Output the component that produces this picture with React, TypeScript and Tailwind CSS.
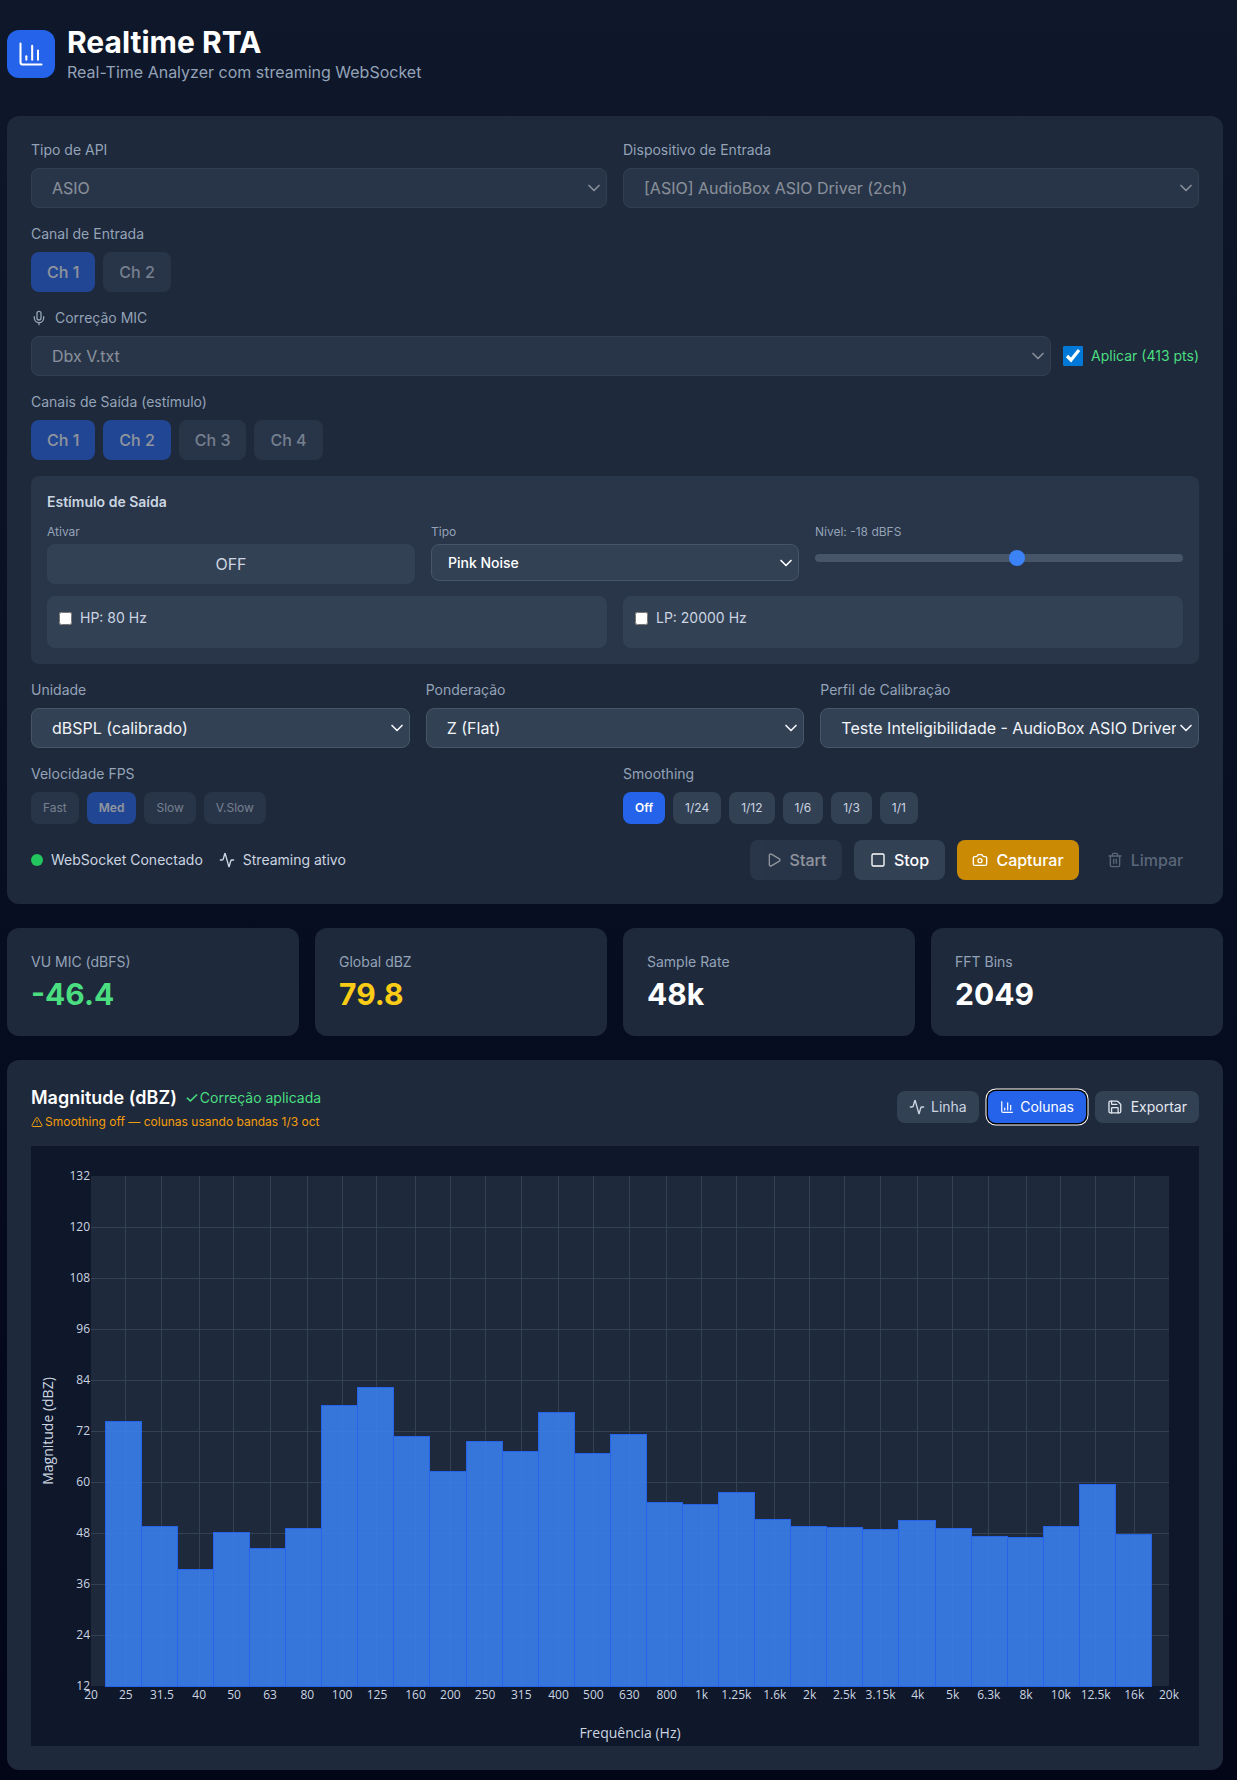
import { Activity, ChartColumn, Camera, ChevronDown, Mic, Play, Save, Square, Trash2, TriangleAlert } from 'lucide-react';

const font = "[font-family:Inter,'DejaVu_Sans',sans-serif]";

const freqs: [number, string][] = [
  [20, '20'], [25, '25'], [31.5, '31.5'], [40, '40'], [50, '50'], [63, '63'], [80, '80'], [100, '100'],
  [125, '125'], [160, '160'], [200, '200'], [250, '250'], [315, '315'], [400, '400'], [500, '500'], [630, '630'],
  [800, '800'], [1000, '1k'], [1250, '1.25k'], [1600, '1.6k'], [2000, '2k'], [2500, '2.5k'], [3150, '3.15k'],
  [4000, '4k'], [5000, '5k'], [6300, '6.3k'], [8000, '8k'], [10000, '10k'], [12500, '12.5k'], [16000, '16k'], [20000, '20k'],
];

// top edge of each column, in px from the top of the chart
const barTops = [
  275.3, 380.3, 423.7, 386.7, 402.3, 382.3, 259.3, 241, 290, 325.3, 295.7, 305, 266, 307.3, 288.3,
  356.3, 358.3, 346.3, 373.3, 380.3, 381.7, 383.3, 374.7, 382.3, 390, 391.3, 380.3, 338.3, 388,
];

const yTicks = [132, 120, 108, 96, 84, 72, 60, 48, 36, 24, 12];

const plot = { left: 60, right: 1138, top: 30, bottom: 540 };
const freqX = (f: number) => plot.left + ((plot.right - plot.left) / 3) * Math.log10(f / 20);
const tickY = (v: number) => plot.top + ((132 - v) / 120) * (plot.bottom - plot.top);

function Chart() {
  return (
    <svg width="1168" height="600" viewBox="0 0 1168 600" className="block">
      <rect x="0" y="0" width="1168" height="600" fill="#0f172a" />
      <rect x={plot.left} y={plot.top} width={plot.right - plot.left} height={plot.bottom - plot.top} fill="#1e293b" />
      <g shapeRendering="crispEdges">
        {/* no grid line on the plot's own edges */}
        {freqs.slice(1, -1).map(([f]) => (
          <line key={f} x1={freqX(f)} x2={freqX(f)} y1={plot.top} y2={plot.bottom} stroke="#334155" strokeWidth="1" />
        ))}
        {yTicks.slice(1, -1).map((v) => (
          <line key={v} x1={plot.left} x2={plot.right} y1={tickY(v)} y2={tickY(v)} stroke="#334155" strokeWidth="1" />
        ))}
        {barTops.map((top, i) => (
          <rect
            key={i}
            x={74.2 + i * 36.08}
            y={top}
            width={36.08}
            height={plot.bottom - top}
            fill="#3b82f6"
            fillOpacity="0.85"
            stroke="#2563eb"
            strokeWidth="1"
          />
        ))}
      </g>
      <g fontFamily="'Open Sans', sans-serif" fontSize="12" fill="#cbd5e1">
        {yTicks.map((v) => (
          <text key={v} x="59" y={tickY(v) + 3.5} textAnchor="end">{v}</text>
        ))}
        {freqs.map(([f, label]) => (
          <text key={f} x={freqX(f)} y="553" textAnchor="middle">{label}</text>
        ))}
      </g>
      <g fontFamily="'Open Sans', sans-serif" fontSize="14" fill="#cbd5e1">
        <text x="599" y="592" textAnchor="middle">Frequência (Hz)</text>
        <text x="22" y="285" textAnchor="middle" transform="rotate(-90 22 285)">Magnitude (dBZ)</text>
      </g>
    </svg>
  );
}

function Label({ children }: { children: React.ReactNode }) {
  return <div className="mb-2 text-sm leading-5 text-[#94a3b8]">{children}</div>;
}

function Sel({ value, disabled }: { value: string; disabled?: boolean }) {
  return (
    <div className={`relative ${disabled ? 'opacity-50' : ''}`}>
      <select
        disabled={disabled}
        defaultValue={value}
        className="block h-10 w-full min-w-0 appearance-none rounded-lg border border-[#475569] bg-[#334155] pl-5 pr-[22px] text-base text-[#f1f5f9]"
      >
        <option>{value}</option>
      </select>
      <ChevronDown className="pointer-events-none absolute right-[3px] top-[10px] h-5 w-5 text-[#f1f5f9]" />
    </div>
  );
}

function ChButton({ label, active }: { label: string; active?: boolean }) {
  return (
    <button
      disabled
      className={`h-10 rounded-lg px-4 text-base font-medium opacity-50 ${active ? 'bg-[#2563eb] text-white' : 'bg-[#334155] text-[#cbd5e1]'}`}
    >
      {label}
    </button>
  );
}

function SmallButton({ label, active, disabled }: { label: string; active?: boolean; disabled?: boolean }) {
  return (
    <button
      disabled={disabled}
      className={`h-8 rounded-lg px-3 text-xs ${active ? 'bg-[#2563eb] font-semibold text-white' : 'bg-[#334155] text-[#cbd5e1]'} ${disabled ? 'opacity-50' : ''}`}
    >
      {label}
    </button>
  );
}

function Stat({ label, value, color }: { label: string; value: string; color: string }) {
  return (
    <div className="rounded-xl bg-[#1e293b] p-6">
      <div className="text-sm leading-5 text-[#94a3b8]">{label}</div>
      <div className={`mt-1 text-3xl font-bold ${color}`}>{value}</div>
    </div>
  );
}

export default function App() {
  return (
    <div className={`min-h-screen bg-gradient-to-b from-[#0f172a] to-[#020617] pb-[10px] pl-[7px] pr-[14px] pt-6 text-white ${font}`}>
      <header className="mb-8 flex items-center gap-3">
        <div className="flex h-12 w-12 items-center justify-center rounded-xl bg-[#2563eb]">
          <ChartColumn className="h-7 w-7 text-white" strokeWidth={1.75} />
        </div>
        <div>
          <h1 className="text-3xl font-bold">Realtime RTA</h1>
          <p className="text-base text-[#94a3b8]">Real-Time Analyzer com streaming WebSocket</p>
        </div>
      </header>

      <section className="mb-6 rounded-xl bg-[#1e293b] p-6">
        <div className="mb-4 grid grid-cols-2 gap-4">
          <div>
            <Label>Tipo de API</Label>
            <Sel value="ASIO" disabled />
          </div>
          <div>
            <Label>Dispositivo de Entrada</Label>
            <Sel value="[ASIO] AudioBox ASIO Driver (2ch)" disabled />
          </div>
        </div>

        <div className="mb-4">
          <Label>Canal de Entrada</Label>
          <div className="flex gap-2">
            <ChButton label="Ch 1" active />
            <ChButton label="Ch 2" />
          </div>
        </div>

        <div className="mb-4">
          <Label>
            <span className="flex items-center gap-2">
              <Mic className="h-4 w-4" />
              Correção MIC
            </span>
          </Label>
          <div className="flex items-center gap-3">
            <div className="min-w-0 flex-1">
              <Sel value="Dbx V.txt" disabled />
            </div>
            <label className="flex items-center gap-2 whitespace-nowrap text-sm text-[#4ade80]">
              <input type="checkbox" defaultChecked className="h-5 w-5 accent-[#0078d7]" />
              Aplicar (413 pts)
            </label>
          </div>
        </div>

        <div className="mb-4">
          <Label>Canais de Saída (estímulo)</Label>
          <div className="flex gap-2">
            <ChButton label="Ch 1" active />
            <ChButton label="Ch 2" active />
            <ChButton label="Ch 3" />
            <ChButton label="Ch 4" />
          </div>
        </div>

        <div className="mb-4 rounded-lg bg-[#334155]/50 p-4">
          <div className="mb-3 text-sm font-semibold leading-5 text-[#cbd5e1]">Estímulo de Saída</div>
          <div className="mb-3 grid grid-cols-3 gap-4">
            <div>
              <div className="mb-1 text-xs text-[#94a3b8]">Ativar</div>
              <button className="h-10 w-full rounded-lg bg-[#334155] text-base text-[#cbd5e1]">OFF</button>
            </div>
            <div>
              <div className="mb-1 text-xs text-[#94a3b8]">Tipo</div>
              <div className="relative">
                <select defaultValue="Pink Noise" className="block h-[37px] w-full appearance-none rounded-lg border border-[#475569] bg-[#334155] pl-4 pr-6 text-sm font-medium text-white">
                  <option>Pink Noise</option>
                </select>
                <ChevronDown className="pointer-events-none absolute right-[3px] top-[9px] h-5 w-5 text-white" />
              </div>
            </div>
            <div>
              <div className="text-xs text-[#94a3b8]">Nível: -18 dBFS</div>
              <input
                type="range"
                min={-40}
                max={0}
                defaultValue={-18}
                className="mt-[14px] block h-2 w-full appearance-none rounded-lg bg-[#475569] [&::-webkit-slider-thumb]:h-4 [&::-webkit-slider-thumb]:w-4 [&::-webkit-slider-thumb]:appearance-none [&::-webkit-slider-thumb]:rounded-full [&::-webkit-slider-thumb]:bg-[#3b82f6]"
              />
            </div>
          </div>
          <div className="grid grid-cols-2 gap-4">
            <div className="h-[52px] rounded-lg bg-[#334155] p-3">
              <label className="flex items-center gap-2 text-sm leading-5 text-[#cbd5e1]">
                <input type="checkbox" className="h-[13px] w-[13px]" />
                HP: 80 Hz
              </label>
            </div>
            <div className="h-[52px] rounded-lg bg-[#334155] p-3">
              <label className="flex items-center gap-2 text-sm leading-5 text-[#cbd5e1]">
                <input type="checkbox" className="h-[13px] w-[13px]" />
                LP: 20000 Hz
              </label>
            </div>
          </div>
        </div>

        <div className="mb-4 grid grid-cols-3 gap-4">
          <div>
            <Label>Unidade</Label>
            <Sel value="dBSPL (calibrado)" />
          </div>
          <div>
            <Label>Ponderação</Label>
            <Sel value="Z (Flat)" />
          </div>
          <div>
            <Label>Perfil de Calibração</Label>
            <Sel value="Teste Inteligibilidade - AudioBox ASIO Driver (2ch)" />
          </div>
        </div>

        <div className="mb-4 grid grid-cols-2 gap-4">
          <div>
            <Label>Velocidade FPS</Label>
            <div className="flex gap-2">
              <SmallButton label="Fast" disabled />
              <SmallButton label="Med" active disabled />
              <SmallButton label="Slow" disabled />
              <SmallButton label="V.Slow" disabled />
            </div>
          </div>
          <div>
            <Label>Smoothing</Label>
            <div className="flex gap-2">
              <SmallButton label="Off" active />
              <SmallButton label="1/24" />
              <SmallButton label="1/12" />
              <SmallButton label="1/6" />
              <SmallButton label="1/3" />
              <SmallButton label="1/1" />
            </div>
          </div>
        </div>

        <div className="flex items-center justify-between">
          <div className="flex items-center gap-4 text-sm text-[#cbd5e1]">
            <div className="flex items-center gap-2">
              <span className="h-3 w-3 rounded-full bg-[#22c55e]" />
              WebSocket Conectado
            </div>
            <div className="flex items-center gap-2">
              <Activity className="h-4 w-4" />
              Streaming ativo
            </div>
          </div>
          <div className="flex items-center gap-3">
            <button disabled className="flex h-10 w-[92px] items-center justify-center gap-2 rounded-lg bg-[#334155] text-base font-medium text-white opacity-50">
              <Play className="h-4 w-4" />
              Start
            </button>
            <button className="flex h-10 w-[91px] items-center justify-center gap-2 rounded-lg bg-[#334155] text-base font-medium text-white">
              <Square className="h-4 w-4" />
              Stop
            </button>
            <button className="flex h-10 w-[122px] items-center justify-center gap-2 rounded-lg bg-[#ca8a04] text-base font-medium text-white">
              <Camera className="h-4 w-4" />
              Capturar
            </button>
            <button disabled className="flex h-10 w-[108px] items-center justify-center gap-2 rounded-lg text-base font-medium text-[#94a3b8] opacity-50">
              <Trash2 className="h-4 w-4" />
              Limpar
            </button>
          </div>
        </div>
      </section>

      <div className="mb-6 grid grid-cols-4 gap-4">
        <Stat label="VU MIC (dBFS)" value="-46.4" color="text-[#4ade80]" />
        <Stat label="Global dBZ" value="79.8" color="text-[#facc15]" />
        <Stat label="Sample Rate" value="48k" color="text-white" />
        <Stat label="FFT Bins" value="2049" color="text-white" />
      </div>

      <section className="rounded-xl bg-[#1e293b] p-6">
        <div className="mb-4 flex items-center justify-between">
          <div>
            <div className="flex items-center gap-2">
              <h2 className="text-lg font-semibold">Magnitude (dBZ)</h2>
              <span className="text-sm text-[#4ade80]">
                <span className="inline-block w-[15px] text-base leading-none">✓</span>
                Correção aplicada
              </span>
            </div>
            <div className="mt-[2px] flex items-center gap-[2px] text-xs text-[#f59e0b]">
              <TriangleAlert className="h-3 w-3" />
              Smoothing off — colunas usando bandas 1/3 oct
            </div>
          </div>
          <div className="flex items-center gap-[9px]">
            <button className="flex h-8 w-[82px] items-center gap-1.5 rounded-lg bg-[#334155] px-3 text-sm text-[#cbd5e1]">
              <Activity className="h-4 w-4" />
              Linha
            </button>
            <button className="flex h-8 w-[98px] items-center gap-1.5 rounded-lg bg-[#2563eb] px-3 text-sm text-white shadow-[0_0_0_1.5px_#000,0_0_0_2.5px_#fff]">
              <ChartColumn className="h-4 w-4" />
              Colunas
            </button>
            <button className="flex h-8 w-[104px] items-center gap-2 rounded-lg bg-[#334155] px-3 text-sm text-[#e2e8f0]">
              <Save className="h-4 w-4" />
              Exportar
            </button>
          </div>
        </div>
        <Chart />
      </section>
    </div>
  );
}
